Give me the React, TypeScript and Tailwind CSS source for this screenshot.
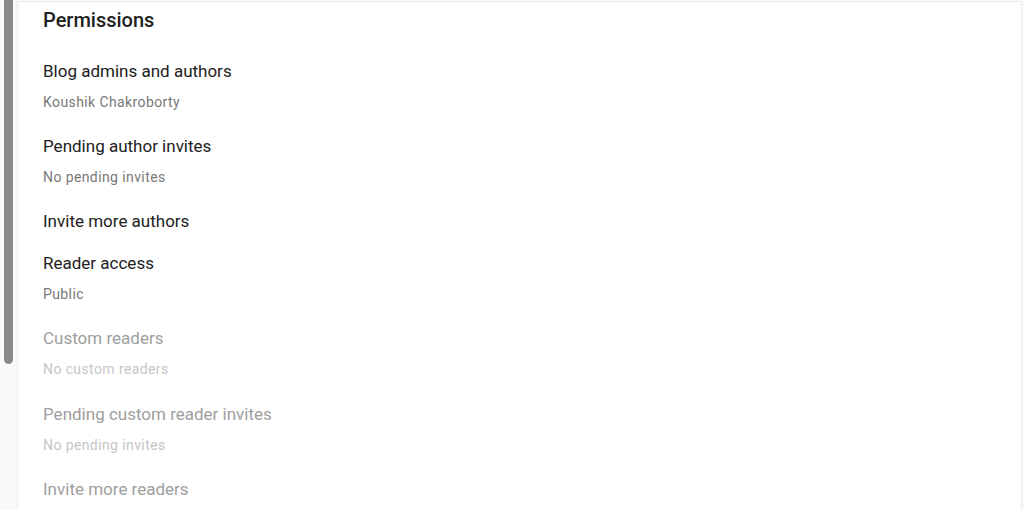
import React from 'react';

type Item = {
  title: string;
  sub?: string;
  disabled?: boolean;
  loose?: boolean;
};

const items: Item[] = [
  { title: 'Blog admins and authors', sub: 'Koushik Chakroborty' },
  { title: 'Pending author invites', sub: 'No pending invites' },
  { title: 'Invite more authors' },
  { title: 'Reader access', sub: 'Public' },
  { title: 'Custom readers', sub: 'No custom readers', disabled: true, loose: true },
  { title: 'Pending custom reader invites', sub: 'No pending invites', disabled: true },
  { title: 'Invite more readers', disabled: true },
];

function Row({ title, sub, disabled, loose }: Item) {
  const pad = !sub ? 'pt-[11px] pb-[7px]' : loose ? 'pt-[11px] pb-[12px]' : 'pt-[11px] pb-[11px]';
  return (
    <div className={pad}>
      <div
        className={`text-[17px] leading-6 ${disabled ? 'text-[#9e9e9e]' : 'text-[#212121]'}`}
      >
        {title}
      </div>
      {sub && (
        <div
          className={`mt-[9px] text-[14px] leading-5 tracking-[0.4px] ${
            disabled ? 'text-[#c6c6c6]' : 'text-[#787878]'
          }`}
        >
          {sub}
        </div>
      )}
    </div>
  );
}

export default function App() {
  return (
    <div
      className="flex h-[510px] w-[1024px] overflow-hidden bg-[#fafafa]"
      style={{ fontFamily: 'Roboto, "Noto Sans", sans-serif' }}
    >
      {/* scrollbar gutter */}
      <div className="w-[17px] shrink-0 pl-[4px]">
        <div className="h-[364px] w-[9px] rounded-b-[5px] bg-[#8a8a8a]" />
      </div>

      {/* settings card */}
      <div className="mt-[1px] mr-[2px] flex-1 border-t border-l border-r border-[#ececec] bg-white pl-[25px]">
        <h2 className="pt-[6px] text-[20px] leading-6 font-medium text-[#212121]">
          Permissions
        </h2>
        <div className="mt-[16px]">
          {items.map((it) => (
            <Row key={it.title} {...it} />
          ))}
        </div>
      </div>
    </div>
  );
}
